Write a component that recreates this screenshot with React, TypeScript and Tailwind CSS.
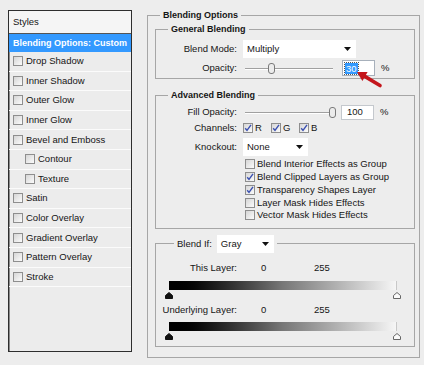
import React from 'react';

const Check = ({ checked = false }: { checked?: boolean }) => (
  <span className="relative inline-block w-[10px] h-[10px] shrink-0 border border-[#8e8e8e] bg-linear-to-br from-[#d6d6d6] to-[#fbfbfb]">
    {checked && (
      <svg className="absolute left-0 top-0" width="8" height="8" viewBox="0 0 8 8">
        <path d="M1.2 4.2 L3 6.4 L7 0.8" fill="none" stroke="#3b50b0" strokeWidth="1.4" />
      </svg>
    )}
  </span>
);

const Select = ({ value, width }: { value: string; width: string }) => (
  <div className={`${width} h-[18px] bg-white flex items-center justify-between pl-[4px] pr-[5px] shrink-0`}>
    <span>{value}</span>
    <svg width="7" height="4" viewBox="0 0 7 4">
      <path d="M0 0 H7 L3.5 4 Z" fill="#111" />
    </svg>
  </div>
);

const Slider = ({ thumb }: { thumb: string }) => (
  <div className="relative w-[90px] h-[16px] shrink-0">
    <div className="absolute left-[2px] right-0 top-[8px] h-px bg-[#a0a0a0] shadow-[0_1px_0_#fff]" />
    <svg className={`absolute top-[3px] ${thumb}`} width="7" height="11" viewBox="0 0 7 11">
      <rect x="0.5" y="0.5" width="6" height="10" rx="2.5" fill="#ececec" stroke="#7a7a7a" />
    </svg>
  </div>
);

const styleItems: [string, boolean][] = [
  ['Drop Shadow', false],
  ['Inner Shadow', false],
  ['Outer Glow', false],
  ['Inner Glow', false],
  ['Bevel and Emboss', false],
  ['Contour', true],
  ['Texture', true],
  ['Satin', false],
  ['Color Overlay', false],
  ['Gradient Overlay', false],
  ['Pattern Overlay', false],
  ['Stroke', false],
];

const blendChecks: [string, boolean][] = [
  ['Blend Interior Effects as Group', false],
  ['Blend Clipped Layers as Group', true],
  ['Transparency Shapes Layer', true],
  ['Layer Mask Hides Effects', false],
  ['Vector Mask Hides Effects', false],
];

const StylesList = () => (
  <div className="mt-[10px] ml-[8px] w-[124px] h-[342px] border border-[#2e2e2e] shadow-[inset_1px_1px_0_#8a8a8a] bg-[#ececec] flex flex-col shrink-0">
    <div className="h-[23px] pl-[4px] flex items-center bg-[#f5f5f5] border-b border-[#555]">Styles</div>
    <div className="h-[18px] pl-[4px] flex items-center bg-[#3399ff] text-white font-bold text-[9px]">
      Blending Options: Custom
    </div>
    {styleItems.map(([label, indent]) => (
      <div
        key={label}
        className={`h-[19.6px] flex items-center gap-[3px] border-b border-[#fbfbfb] ${indent ? 'pl-[16px]' : 'pl-[4px]'}`}
      >
        <Check />
        <span>{label}</span>
      </div>
    ))}
  </div>
);

const Thumbs = () => (
  <div className="relative h-[7px] mt-[2px]">
    <svg className="absolute left-[9px] top-0" width="8" height="7" viewBox="0 0 8 7">
      <path d="M4 0.5 L7.5 3.5 V6.5 H0.5 V3.5 Z" fill="#111" stroke="#111" />
    </svg>
    <svg className="absolute left-[237px] top-0" width="8" height="7" viewBox="0 0 8 7">
      <path d="M4 0.5 L7.5 3.5 V6.5 H0.5 V3.5 Z" fill="#fafafa" stroke="#666" />
    </svg>
  </div>
);

const RedArrow = () => (
  <svg className="absolute left-[352px] top-[66px]" width="34" height="24" viewBox="0 0 34 24">
    <path d="M12.8 10.4 L28 19.5" stroke="#c4161c" strokeWidth="3.6" strokeLinecap="round" />
    <path d="M5 6 L15.6 6 L10.4 15 Z" fill="#c4161c" />
  </svg>
);

export default function App() {
  return (
    <div className="relative w-[424px] h-[365px] overflow-hidden bg-[#ededed] text-[#151515] font-['Liberation_Sans',Arial,sans-serif] text-[9.5px] leading-[12px] flex items-start">
      <StylesList />

      <fieldset className="ml-[15px] mt-[9px] w-[273px] h-[349px] border border-[#a6a6a6] pl-[7px] min-w-0">
        <legend className="ml-[5px] px-[3px] font-bold text-[9px]">Blending Options</legend>

        {/* General Blending */}
        <fieldset className="mt-[2px] w-[260px] border border-[#a6a6a6] pb-[2px] min-w-0">
          <legend className="ml-[12px] px-[3px] font-bold text-[9px]">General Blending</legend>
          <div className="mt-[5px] h-[18px] flex items-center">
            <span className="w-[81px] text-right">Blend Mode:</span>
            <div className="ml-[6px]">
              <Select value="Multiply" width="w-[113px]" />
            </div>
          </div>
          <div className="mt-[2px] h-[16px] flex items-center">
            <span className="w-[81px] text-right">Opacity:</span>
            <div className="ml-[6px]">
              <Slider thumb="left-[25px]" />
            </div>
            <div className="ml-[9px] w-[33px] h-[16px] border border-[#a7b0bb] bg-white flex items-center pl-[2px]">
              <span className="bg-[#3399ff] text-white px-[1px] outline-dotted outline-1 outline-[#555] leading-[11px]">30</span>
            </div>
            <span className="ml-[6px]">%</span>
          </div>
        </fieldset>

        {/* Advanced Blending */}
        <fieldset className="mt-[10px] w-[260px] border border-[#a6a6a6] pb-[6px] min-w-0">
          <legend className="ml-[12px] px-[3px] font-bold text-[9px]">Advanced Blending</legend>
          <div className="mt-[3px] h-[16px] flex items-center">
            <span className="w-[81px] text-right">Fill Opacity:</span>
            <div className="ml-[6px]">
              <Slider thumb="left-[86px]" />
            </div>
            <div className="ml-[8px] w-[33px] h-[15px] border border-[#c4c8cd] bg-white flex items-center pl-[5px]">
              100
            </div>
            <span className="ml-[6px]">%</span>
          </div>
          <div className="mt-[1px] h-[14px] flex items-center">
            <span className="w-[81px] text-right">Channels:</span>
            <div className="ml-[6px] flex">
              {['R', 'G', 'B'].map((c) => (
                <div key={c} className="w-[28px] flex items-center gap-[2px]">
                  <Check checked />
                  <span>{c}</span>
                </div>
              ))}
            </div>
          </div>
          <div className="mt-[3px] h-[18px] flex items-center">
            <span className="w-[81px] text-right">Knockout:</span>
            <div className="ml-[6px]">
              <Select value="None" width="w-[65px]" />
            </div>
          </div>
          <div className="mt-[2px] pl-[89px]">
            {blendChecks.map(([label, checked]) => (
              <div key={label} className="h-[12.75px] flex items-center gap-[2px]">
                <Check checked={checked} />
                <span>{label}</span>
              </div>
            ))}
          </div>
        </fieldset>

        {/* Blend If */}
        <fieldset className="mt-[6px] w-[260px] border border-[#a6a6a6] pb-[6px] min-w-0">
          <legend className="ml-[18px] px-[3px] flex items-center">
            <span>Blend If:</span>
            <div className="ml-[5px]">
              <Select value="Gray" width="w-[57px]" />
            </div>
          </legend>
          <div className="mt-[9px] h-[12px] flex items-center">
            <span className="w-[81px] text-right">This Layer:</span>
            <span className="ml-[24px] w-[53px]">0</span>
            <span>255</span>
          </div>
          <div className="mt-[7px] ml-[13px] w-[228px] h-[9px] bg-linear-to-r from-black via-[#777] to-[#f6f6f6] border-r border-[#c8c8c8]" />
          <Thumbs />
          <div className="mt-[5px] h-[12px] flex items-center">
            <span className="w-[81px] text-right">Underlying Layer:</span>
            <span className="ml-[24px] w-[53px]">0</span>
            <span>255</span>
          </div>
          <div className="mt-[6px] ml-[13px] w-[228px] h-[9px] bg-linear-to-r from-black via-[#777] to-[#f6f6f6] border-r border-[#c8c8c8]" />
          <Thumbs />
        </fieldset>
      </fieldset>

      <RedArrow />
    </div>
  );
}
